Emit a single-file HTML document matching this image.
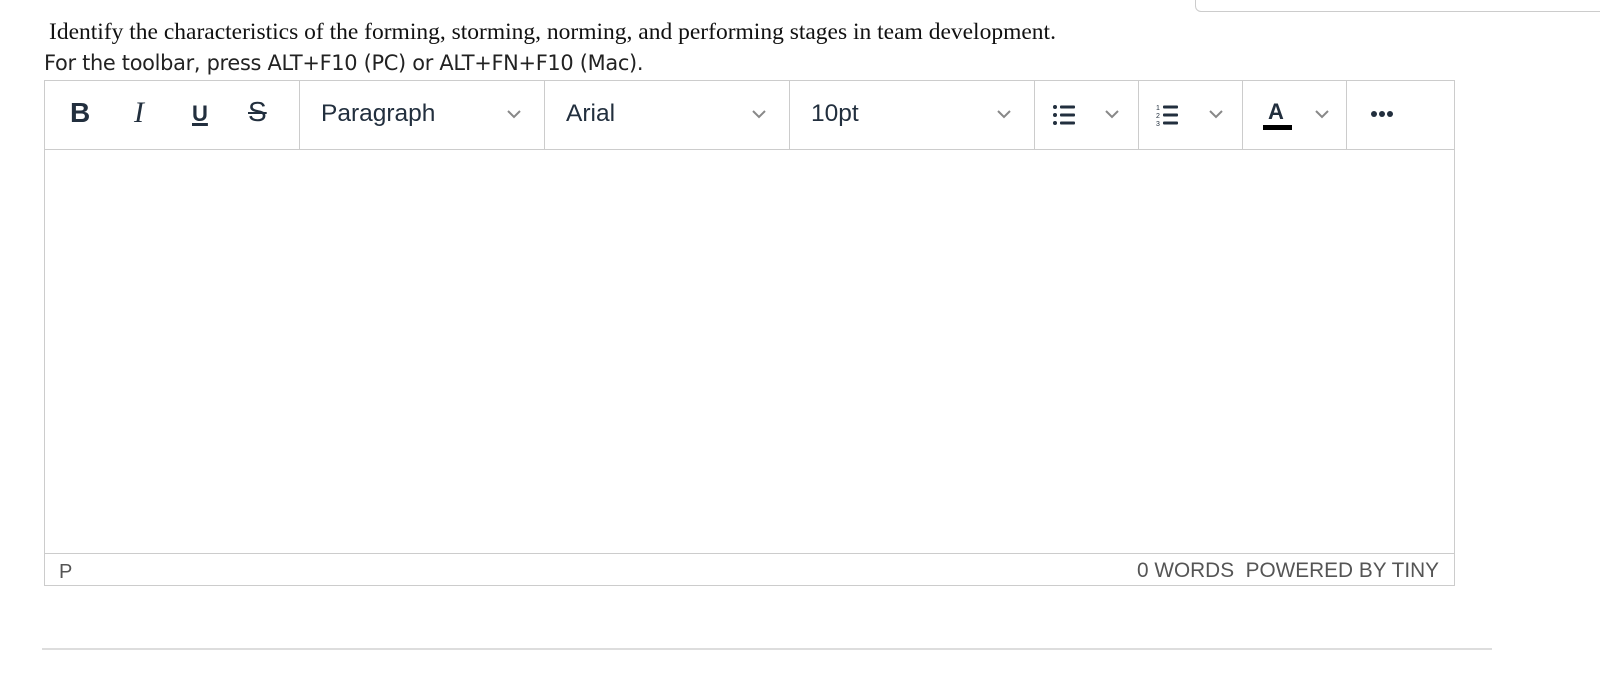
<!DOCTYPE html>
<html><head><meta charset="utf-8"><style>
body{margin:0;width:1600px;height:694px;background:#fff;position:relative;overflow:hidden;font-family:"Liberation Sans",sans-serif}
.a{position:absolute}
.q{left:49px;top:19px;font-family:"Liberation Serif",serif;font-size:23.5px;color:#111;white-space:nowrap}
.h{left:44px;top:51px;font-family:"DejaVu Sans","Liberation Sans",sans-serif;font-size:20.9px;color:#222;white-space:nowrap;letter-spacing:-0.3px}
.ed{left:44px;top:80px;width:1411px;height:506px;border:1px solid #ccc;box-sizing:border-box}
.tb{left:44px;top:80px;width:1411px;height:70px;border-bottom:1px solid #ccc;box-sizing:border-box}
.sep{position:absolute;top:0;width:1px;height:69px;background:#ccc}
.tx{position:absolute;top:20px;font-size:24.5px;color:#222f3e;white-space:nowrap}
.chev{position:absolute;top:28px}
.sb{left:44px;top:553px;width:1411px;height:1px;background:#ccc}
</style></head><body>
<div class="a" style="left:1195px;top:-10px;width:420px;height:22px;border:1px solid #ccc;border-radius:6px;box-sizing:border-box"></div>
<div class="a q">Identify the characteristics of the forming, storming, norming, and performing stages in team development.</div>
<div class="a h">For the toolbar, press ALT+F10 (PC) or ALT+FN+F10 (Mac).</div>
<div class="a ed"></div>
<div class="a tb">
 <div class="tx" style="left:26px;font-weight:bold;font-size:28px;top:17px">B</div>
 <div class="tx" style="left:90px;font-family:'Liberation Serif',serif;font-style:italic;font-size:30px;top:16px">I</div>
 <div class="tx" style="left:148px;font-weight:bold;font-size:22px;top:21px;text-decoration:underline;text-decoration-thickness:3px">U</div>
 <div class="tx" style="left:204px;font-size:28px;top:16px;text-decoration:line-through;text-decoration-thickness:2px">S</div>
 <div class="sep" style="left:255px"></div>
 <div class="tx" style="left:277px">Paragraph</div>
 <svg class="chev" style="left:462px" width="16" height="12"><path d="M2 3l6 6 6-6" fill="none" stroke="#888" stroke-width="2"/></svg>
 <div class="sep" style="left:500px"></div>
 <div class="tx" style="left:522px">Arial</div>
 <svg class="chev" style="left:707px" width="16" height="12"><path d="M2 3l6 6 6-6" fill="none" stroke="#888" stroke-width="2"/></svg>
 <div class="sep" style="left:745px"></div>
 <div class="tx" style="left:767px">10pt</div>
 <svg class="chev" style="left:952px" width="16" height="12"><path d="M2 3l6 6 6-6" fill="none" stroke="#888" stroke-width="2"/></svg>
 <div class="sep" style="left:990px"></div>
 <svg class="a" style="left:1008px;top:24px" width="26" height="22"><g fill="#222f3e"><circle cx="3" cy="3" r="2"/><circle cx="3" cy="11" r="2"/><circle cx="3" cy="19" r="2"/><rect x="8" y="1.5" width="15" height="3" rx="1"/><rect x="8" y="9.5" width="15" height="3" rx="1"/><rect x="8" y="17.5" width="15" height="3" rx="1"/></g></svg>
 <svg class="chev" style="left:1060px" width="16" height="12"><path d="M2 3l6 6 6-6" fill="none" stroke="#888" stroke-width="2"/></svg>
 <div class="sep" style="left:1094px"></div>
 <svg class="a" style="left:1112px;top:24px" width="26" height="22"><g fill="#222f3e"><text x="0" y="6" font-size="7" font-family="Liberation Sans">1</text><text x="0" y="14" font-size="7" font-family="Liberation Sans">2</text><text x="0" y="22" font-size="7" font-family="Liberation Sans">3</text><rect x="7" y="1.5" width="15" height="3" rx="1"/><rect x="7" y="9.5" width="15" height="3" rx="1"/><rect x="7" y="17.5" width="15" height="3" rx="1"/></g></svg>
 <svg class="chev" style="left:1164px" width="16" height="12"><path d="M2 3l6 6 6-6" fill="none" stroke="#888" stroke-width="2"/></svg>
 <div class="sep" style="left:1198px"></div>
 <div class="tx" style="left:1224px;font-size:22px;top:19px;font-weight:bold">A</div>
 <div class="a" style="left:1219px;top:45px;width:29px;height:5px;background:#000"></div>
 <svg class="chev" style="left:1270px" width="16" height="12"><path d="M2 3l6 6 6-6" fill="none" stroke="#888" stroke-width="2"/></svg>
 <div class="sep" style="left:1302px"></div>
 <svg class="a" style="left:1326px;top:30px" width="30" height="8"><g fill="#222f3e"><circle cx="4" cy="4" r="3"/><circle cx="12" cy="4" r="3"/><circle cx="20" cy="4" r="3"/></g></svg>
</div>
<div class="a sb"></div>
<div class="a" style="left:59px;top:561px;font-size:20px;color:#555">P</div>
<div class="a" style="left:1137px;top:559px;font-size:20.8px;color:#555;white-space:nowrap">0 WORDS&nbsp; POWERED BY TINY</div>
<div class="a" style="left:42px;top:648px;width:1450px;height:2px;background:#ddd"></div>
</body></html>
